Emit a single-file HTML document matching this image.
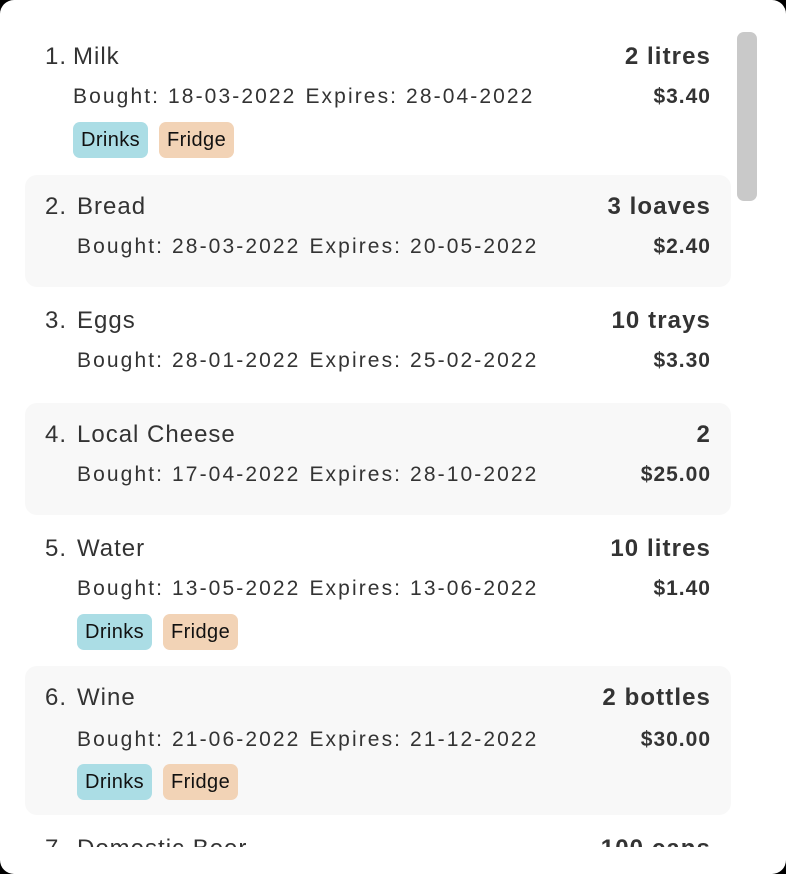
<!DOCTYPE html>
<html><head><style>
html,body{margin:0;padding:0;background:#000;width:786px;height:874px;overflow:hidden;}
.win{position:absolute;left:0;top:0;width:786px;height:874px;background:#fff;border-radius:14px;overflow:hidden;font-family:"Liberation Sans",sans-serif;color:#333;}
.clip{position:absolute;left:0;top:0;width:786px;height:847px;overflow:hidden;}
.row{position:absolute;left:25px;width:706px;border-radius:12px;}
.bg{background:#f8f8f8;}
.t{position:absolute;font-size:24px;line-height:28px;white-space:nowrap;letter-spacing:1px;}
.t span{position:absolute;left:28px;top:0;}
.t.w span{left:32px;}
.d{position:absolute;font-size:21px;line-height:26px;white-space:nowrap;letter-spacing:2.1px;}
.d b{font-weight:normal;margin-left:9px;}
.q{position:absolute;right:20px;font-size:24px;font-weight:bold;line-height:28px;white-space:nowrap;letter-spacing:1.1px;}
.p{position:absolute;right:20px;font-size:21px;font-weight:bold;line-height:26px;letter-spacing:1px;}
.tag{position:absolute;height:36px;line-height:36px;border-radius:7px;font-size:20px;color:#111;padding:0 8px;letter-spacing:0.4px;}
.dr{background:#abdde5;}
.fr{background:#f2d3b6;}
.sb{position:absolute;left:737px;top:32px;width:20px;height:169px;background:#c9c9c9;border-radius:7px;}
</style></head><body>
<div class="win"><div class="clip">
<div class="row" style="top:32px;height:141px">
 <div class="t" style="left:20px;top:11px">1.<span>Milk</span></div>
 <div class="q" style="top:11px">2 litres</div>
 <div class="d" style="left:48px;top:52px">Bought: 18-03-2022<b>Expires: 28-04-2022</b></div>
 <div class="p" style="top:52px">$3.40</div>
 <div class="tag dr" style="left:48px;top:90px">Drinks</div>
 <div class="tag fr" style="left:134px;top:90px">Fridge</div>
</div>
<div class="row bg" style="top:175px;height:112px">
 <div class="t w" style="left:20px;top:18px">2.<span>Bread</span></div>
 <div class="q" style="top:18px">3 loaves</div>
 <div class="d" style="left:52px;top:59px">Bought: 28-03-2022<b>Expires: 20-05-2022</b></div>
 <div class="p" style="top:59px">$2.40</div>
</div>
<div class="row" style="top:289px;height:112px">
 <div class="t w" style="left:20px;top:18px">3.<span>Eggs</span></div>
 <div class="q" style="top:18px">10 trays</div>
 <div class="d" style="left:52px;top:59px">Bought: 28-01-2022<b>Expires: 25-02-2022</b></div>
 <div class="p" style="top:59px">$3.30</div>
</div>
<div class="row bg" style="top:403px;height:112px">
 <div class="t w" style="left:20px;top:18px">4.<span>Local Cheese</span></div>
 <div class="q" style="top:18px">2</div>
 <div class="d" style="left:52px;top:59px">Bought: 17-04-2022<b>Expires: 28-10-2022</b></div>
 <div class="p" style="top:59px">$25.00</div>
</div>
<div class="row" style="top:517px;height:148px">
 <div class="t w" style="left:20px;top:18px">5.<span>Water</span></div>
 <div class="q" style="top:18px">10 litres</div>
 <div class="d" style="left:52px;top:59px">Bought: 13-05-2022<b>Expires: 13-06-2022</b></div>
 <div class="p" style="top:59px">$1.40</div>
 <div class="tag dr" style="left:52px;top:97px">Drinks</div>
 <div class="tag fr" style="left:138px;top:97px">Fridge</div>
</div>
<div class="row bg" style="top:666px;height:149px">
 <div class="t w" style="left:20px;top:18px">6.<span>Wine</span></div>
 <div class="q" style="top:18px">2 bottles</div>
 <div class="d" style="left:52px;top:61px">Bought: 21-06-2022<b>Expires: 21-12-2022</b></div>
 <div class="p" style="top:61px">$30.00</div>
 <div class="tag dr" style="left:52px;top:98px">Drinks</div>
 <div class="tag fr" style="left:138px;top:98px">Fridge</div>
</div>
<div class="row" style="top:817px;height:30px;overflow:hidden">
 <div class="t w" style="left:20px;top:18px">7.<span>Domestic Beer</span></div>
 <div class="q" style="top:18px">100 cans</div>
</div>
<div class="sb"></div>
</div></div>
</body></html>
